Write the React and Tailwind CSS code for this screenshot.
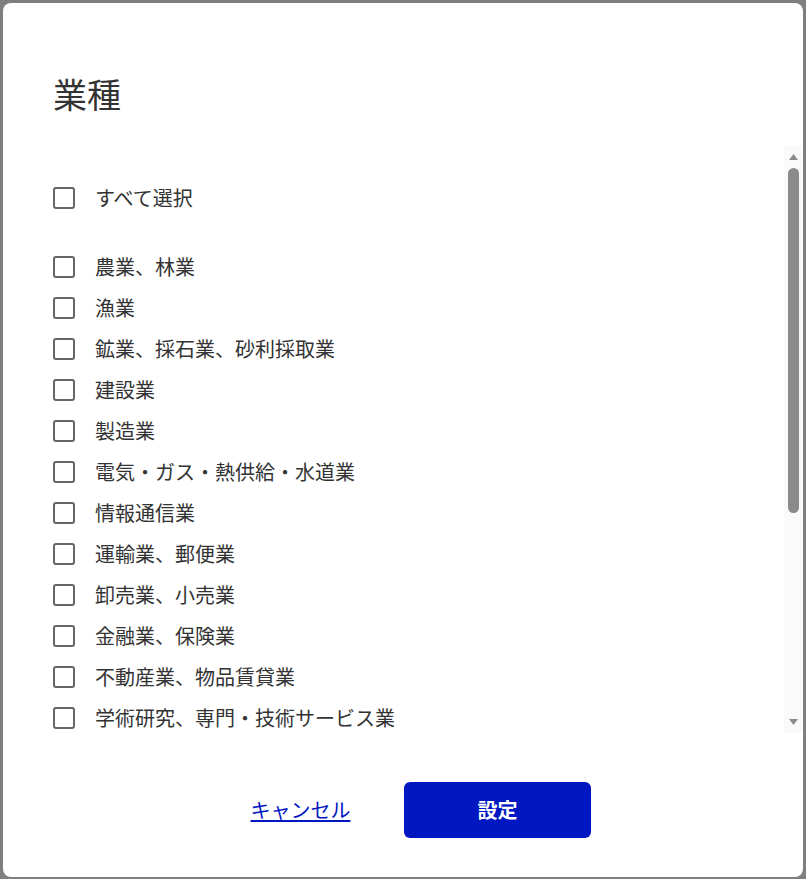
import React from 'react';

const industries = [
  "農業、林業",
  "漁業",
  "鉱業、採石業、砂利採取業",
  "建設業",
  "製造業",
  "電気・ガス・熱供給・水道業",
  "情報通信業",
  "運輸業、郵便業",
  "卸売業、小売業",
  "金融業、保険業",
  "不動産業、物品賃貸業",
  "学術研究、専門・技術サービス業",
];

function Checkbox() {
  return <span className="block h-[22px] w-[22px] shrink-0 rounded-[3px] border-2 border-[#666] bg-white" />;
}

function Row({ label }) {
  return (
    <label className="flex h-[41px] items-center">
      <Checkbox />
      <span className="ml-[20px] text-[20px] leading-none text-[#333]">{label}</span>
    </label>
  );
}

function App() {
  return (
    <div className="flex h-[879px] w-[806px] bg-[#7f7f7f] p-[3px] pr-0 font-['Noto_Sans_CJK_JP','Noto_Sans',sans-serif]">
      <div className="flex h-[874px] w-[800px] flex-col rounded-lg bg-white">
        <h2 className="pl-[50px] pt-[66px] text-[34px] leading-[50px] font-normal text-[#333]">業種</h2>

        <div className="mt-[26px] flex h-[588px] bg-white">
          <div className="flex-1 overflow-hidden pl-[50px] pt-[32px]">
            <Row label="すべて選択" />
            <div className="mt-[28px]">
              {industries.map((name) => (
                <Row key={name} label={name} />
              ))}
            </div>
          </div>

          <div className="flex w-[19px] flex-col items-center bg-[#fafafa]">
            <div className="flex h-[23px] items-center justify-center">
              <svg width="9" height="6" viewBox="0 0 9 6">
                <path d="M4.5 0L9 6H0z" fill="#8b8b8b" />
              </svg>
            </div>
            <div className="h-[345px] w-[11px] rounded-full bg-[#8b8b8b]" />
            <div className="flex-1" />
            <div className="flex h-[22px] items-center justify-center">
              <svg width="9" height="6" viewBox="0 0 9 6">
                <path d="M0 0h9L4.5 6z" fill="#8b8b8b" />
              </svg>
            </div>
          </div>
        </div>

        <div className="mt-[49px] flex items-center justify-center gap-[10px] pr-[8px]">
          <div className="flex w-[187px] justify-center">
            <a href="#" className="text-[20px] leading-[28px] text-[#0017c1] underline underline-offset-2">
              キャンセル
            </a>
          </div>
          <button className="h-[56px] w-[187px] rounded-md bg-[#0017c1] text-[20px] font-bold text-white">
            設定
          </button>
        </div>
      </div>
    </div>
  );
}

export default App;
